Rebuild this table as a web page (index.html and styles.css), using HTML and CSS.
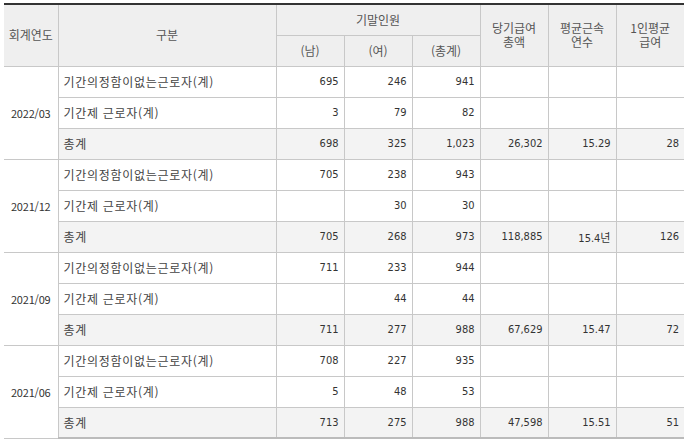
FILE: index.html
```html
<!DOCTYPE html>
<html lang="ko">
<head>
<meta charset="utf-8">
<title>직원 현황</title>
<link rel="stylesheet" href="styles.css">
</head>
<body>
<div class="wrap">
<table class="grid">
  <colgroup>
    <col class="c-year"><col class="c-cat"><col class="c-n"><col class="c-n"><col class="c-n"><col class="c-n"><col class="c-n"><col class="c-n">
  </colgroup>
  <thead>
    <tr>
      <th rowspan="2">회계연도</th>
      <th rowspan="2">구분</th>
      <th colspan="3">기말인원</th>
      <th rowspan="2">당기급여<br>총액</th>
      <th rowspan="2">평균근속<br>연수</th>
      <th rowspan="2">1인평균<br>급여</th>
    </tr>
    <tr>
      <th>(남)</th>
      <th>(여)</th>
      <th>(총계)</th>
    </tr>
  </thead>
  <tbody>
    <tr><td rowspan="3" class="year">2022/03</td><td class="lbl">기간의정함이없는근로자(계)</td><td class="num">695</td><td class="num">246</td><td class="num">941</td><td></td><td></td><td></td></tr>
    <tr><td class="lbl">기간제 근로자(계)</td><td class="num">3</td><td class="num">79</td><td class="num">82</td><td></td><td></td><td></td></tr>
    <tr class="total"><td class="lbl">총계</td><td class="num">698</td><td class="num">325</td><td class="num">1,023</td><td class="num">26,302</td><td class="num">15.29</td><td class="num">28</td></tr>

    <tr><td rowspan="3" class="year">2021/12</td><td class="lbl">기간의정함이없는근로자(계)</td><td class="num">705</td><td class="num">238</td><td class="num">943</td><td></td><td></td><td></td></tr>
    <tr><td class="lbl">기간제 근로자(계)</td><td class="num"></td><td class="num">30</td><td class="num">30</td><td></td><td></td><td></td></tr>
    <tr class="total"><td class="lbl">총계</td><td class="num">705</td><td class="num">268</td><td class="num">973</td><td class="num">118,885</td><td class="num">15.4년</td><td class="num">126</td></tr>

    <tr><td rowspan="3" class="year">2021/09</td><td class="lbl">기간의정함이없는근로자(계)</td><td class="num">711</td><td class="num">233</td><td class="num">944</td><td></td><td></td><td></td></tr>
    <tr><td class="lbl">기간제 근로자(계)</td><td class="num"></td><td class="num">44</td><td class="num">44</td><td></td><td></td><td></td></tr>
    <tr class="total"><td class="lbl">총계</td><td class="num">711</td><td class="num">277</td><td class="num">988</td><td class="num">67,629</td><td class="num">15.47</td><td class="num">72</td></tr>

    <tr><td rowspan="3" class="year">2021/06</td><td class="lbl">기간의정함이없는근로자(계)</td><td class="num">708</td><td class="num">227</td><td class="num">935</td><td></td><td></td><td></td></tr>
    <tr><td class="lbl">기간제 근로자(계)</td><td class="num">5</td><td class="num">48</td><td class="num">53</td><td></td><td></td><td></td></tr>
    <tr class="total last"><td class="lbl">총계</td><td class="num">713</td><td class="num">275</td><td class="num">988</td><td class="num">47,598</td><td class="num">15.51</td><td class="num">51</td></tr>
  </tbody>
</table>
</div>
</body>
</html>
```

FILE: styles.css
```css
html, body {
  margin: 0;
  padding: 0;
  background: #ffffff;
}

.wrap {
  padding: 3px 4px;
}

.grid {
  width: 680px;
  table-layout: fixed;
  border-collapse: collapse;
  border-top: 2px solid #333333;
  font-family: "DejaVu Sans Condensed", "DejaVu Sans", "Noto Sans CJK KR", sans-serif;
  font-size: 11px;
  color: #333333;
}

.c-year { width: 54px; }
.c-cat { width: 218px; }
.c-n { width: 68px; }

.grid th,
.grid td {
  border: 1px solid #c8c8c8;
  height: 31px;
  padding: 0 5px;
  box-sizing: border-box;
  vertical-align: middle;
  white-space: nowrap;
}

.grid tr > :first-child { border-left: none; }
.grid tr > :last-child { border-right: none; }
.grid thead tr:nth-child(2) > :last-child { border-right: 1px solid #c8c8c8; }

.grid th {
  background: #efefef;
  font-family: "Noto Sans CJK KR", sans-serif;
  font-weight: normal;
  font-size: 12px;
  line-height: 14px;
  color: #555555;
  text-align: center;
  padding: 0 2px;
}

.grid .year {
  text-align: center;
  border-left: none;
  padding: 0;
  font-family: "Noto Sans CJK KR", sans-serif;
  font-size: 11px;
  letter-spacing: -0.2px;
}

.grid .lbl {
  font-family: "Noto Sans CJK KR", sans-serif;
  font-size: 12px;
  letter-spacing: 0.7px;
  color: #444444;
  text-align: left;
}

.grid .num {
  text-align: right;
}

.grid .total td {
  background: #f3f3f3;
}

.grid .last td {
  border-bottom: 2px solid #bbbbbb;
}
```
